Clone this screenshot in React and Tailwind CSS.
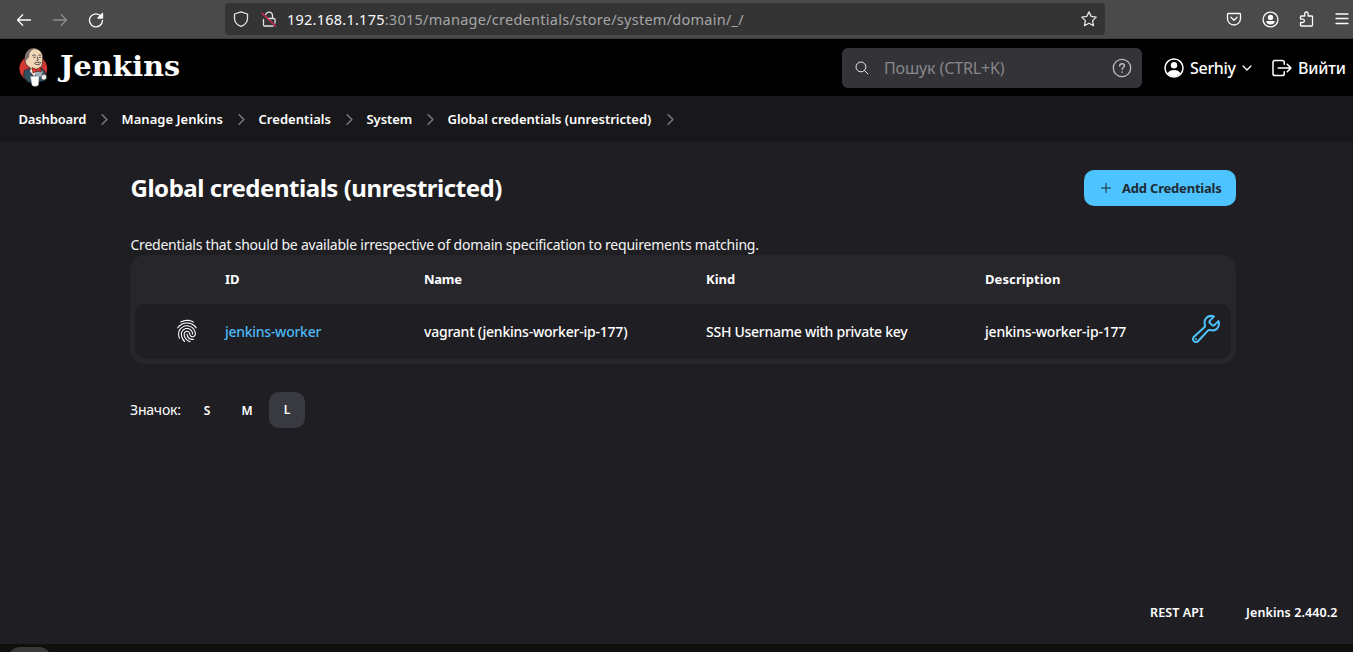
import React from "react";
import {
  IoAdd,
  IoBuildOutline,
  IoChevronDown,
  IoChevronForward,
  IoFingerPrintOutline,
  IoLogOutOutline,
  IoSearchOutline,
} from "react-icons/io5";

const stroke = {
  fill: "none",
  stroke: "currentColor",
  strokeWidth: 1.3,
  strokeLinecap: "round",
  strokeLinejoin: "round",
};

function Glyph({ className, children, size = 16 }) {
  return (
    <svg viewBox={`0 0 ${size} ${size}`} className={`block shrink-0 ${className}`} {...stroke}>
      {children}
    </svg>
  );
}

function AccountGlyph({ className }) {
  return (
    <svg viewBox="0 0 20 20" className={`block shrink-0 ${className}`}>
      <circle cx="10" cy="10" r="9" fill="none" stroke="currentColor" strokeWidth="1.5" />
      <circle cx="10" cy="7.3" r="3.2" fill="currentColor" />
      <path d="M3.6 15.2C4.9 12.8 7 12 10 12s5.100.8 6.400 3.200A8.300 8.300 0 0 1 10 18.400a8.300 8.300 0 0 1-6.400-3.200z" fill="currentColor" />
    </svg>
  );
}

function BrowserAccountGlyph({ className }) {
  return (
    <svg viewBox="0 0 16 16" className={`block shrink-0 ${className}`}>
      <circle cx="8" cy="8" r="7" fill="none" stroke="currentColor" strokeWidth="1.200" />
      <circle cx="8" cy="6" r="2.500" fill="currentColor" />
      <path d="M4 9.500h8c0 2-1.500 3.200-4 3.200S4 11.500 4 9.500z" fill="currentColor" />
    </svg>
  );
}

function BrowserBar() {
  return (
    <div className="flex h-[39px] shrink-0 items-center border-b border-[#3c3c3c] bg-[#4a4a4a] text-[#fbfbfe]">
      <Glyph className="mt-px ml-4 size-4">
        <path d="M14.500 8h-13M6.700 2.800 1.500 8l5.200 5.200" />
      </Glyph>
      <Glyph className="mt-px ml-5 size-4 text-[#8d8d8d]">
        <path d="M1.500 8h13M9.300 2.800 14.500 8l-5.200 5.200" />
      </Glyph>
      <Glyph className="mt-px ml-5 size-4">
        <path d="M13 4.200A6.500 6.500 0 1 0 14.500 8.500" />
        <path d="M14.500 1.500v4.500H10z" fill="currentColor" />
      </Glyph>
      <div className="ml-[121px] flex h-8 w-[880px] items-center rounded bg-[#343434] pr-2">
        <Glyph className="ml-2 size-4 text-[#e3e3e6]">
          <path d="M8 .8 14.500 3v4.200c0 3.800-2.200 6.500-6.500 8.100C3.700 13.700 1.500 11 1.500 7.200V3z" />
        </Glyph>
        <Glyph className="ml-3 size-4 text-[#e3e3e6]">
          <path d="M6.500 7.500H13c.6 0 1 .4 1 1V12M2.500 8.500V14c0 .6.400 1 1 1h8.500M4.700 3.500a3.500 3.500 0 0 1 6.800 1V7" />
          <path d="M1 2.200 14.500 15" stroke="#e22850" />
        </Glyph>
        <div className="mt-px ml-[10px] flex-1 whitespace-nowrap font-['Noto_Sans',sans-serif] text-[14.5px] text-[#a5a5a7]">
          <span className="tracking-[0.240px] text-[#fbfbfe]">192.168.1.175</span>
          <span className="tracking-[0.260px]">:3015/manage/credentials/store/system/domain/_/</span>
        </div>
        <Glyph className="size-4 text-[#e3e3e6]">
          <path d="m8 .9 2.200 4.500 5 .7-3.600 3.500.9 5L8 12.200l-4.500 2.400.9-5L.8 6.100l5-.7z" />
        </Glyph>
      </div>
      <Glyph className="ml-[121px] size-4">
        <path d="M2.300 2.500h11.400c.5 0 .8.300.8.800v4.200a6.500 6.500 0 0 1-13 0V3.300c0-.5.300-.8.800-.8z" />
        <path d="M5 6.300 8 9.200l3-2.900" />
      </Glyph>
      <BrowserAccountGlyph className="mt-px ml-5 size-[17px]" />
      <Glyph className="ml-5 size-4">
        <path d="M2 5h3.700V2.700a1.700 1.700 0 0 1 3.400 0V5h3.600c.5 0 .8.300.8.800v8.400c0 .5-.3.800-.8.800H2.300c-.5 0-.8-.3-.8-.8v-2.700h2.200a1.700 1.700 0 0 0 0-3.400H1.500V5.500z" />
      </Glyph>
      <Glyph className="ml-[19px] size-4">
        <path d="M2 3h12M2 7.500h12M2 12.500h12" />
      </Glyph>
    </div>
  );
}

function JenkinsMark() {
  return (
    <svg viewBox="0 0 30 40" className="block h-10 w-[30px] shrink-0">
      <ellipse cx="14.300" cy="21.500" rx="13.900" ry="13" fill="#d33833" />
      <path d="M5.500 23.500c3-1.800 6-2 9-1.500l8-1 3 3 1.800 6-1.800 4-6 1-4 2-7-2-4-6z" fill="#335061" stroke="#111f29" strokeWidth=".7" />
      <path d="M6.500 10C7 4.500 11 1.300 15.500 1.600c5.500.3 8.700 4.700 8.200 10.400-.2 4 .2 7-3.700 9.500-4 2-8.500 1-10.800-2.500-2.700-.8-3.700-5.500-2.700-9z" fill="#f0d6b7" stroke="#302b29" strokeWidth=".8" />
      <path d="M6 9.500C6.500 4 11.500.6 16.500 1.500 12 3 10.500 5.500 10.300 8c.5 1.700-1 2.500-1.300 4-1-.8-2 .5-1.500 2-1.700-.5-2-2.500-1.500-4.500z" fill="#81706d" />
      <path d="M13.500 8.500c1-.8 2-.8 3-.2M19.500 8.300c1-.7 1.700-.6 2.500 0M14.700 10.300h1.500M20.300 10.300h1.300M18.300 10l1 3.200-1.500.3M15.500 16.200c2-1.200 4.500-1.200 6.300-.5M16.500 17.300c1.500.7 3.300.5 4.500-.4" fill="none" stroke="#302b29" strokeWidth=".8" strokeLinecap="round" />
      <path d="m12 21 5 5.500-1.500 3-4.500-5z" fill="#f7e4cd" />
      <path d="m16 25 8-1-1.500 6-5-1z" fill="#9fb0bb" />
      <path d="m13 20.500 4.300 1.800 4.200-2 .8 4.700-3.800-1.200-4.500 2.200z" fill="#d33833" stroke="#6b1714" strokeWidth=".6" />
      <path d="M11.500 29.500 20 29l-.5 9c-1.300 1.700-5.300 1.700-6.500.2z" fill="#fff" stroke="#999" strokeWidth=".5" />
      <path d="M22.500 28.500c2-1.300 4.500-1.200 5 .5l-.2 3-2.500 1-2.500-1z" fill="#f4f4f4" stroke="#444" strokeWidth=".6" />
    </svg>
  );
}

function Header() {
  return (
    <header className="flex h-[57px] shrink-0 items-center bg-black text-white">
      <div className="-mt-px ml-[19px]">
        <JenkinsMark />
      </div>
      <div className="-mt-[3px] ml-[11px] w-[140px] whitespace-nowrap font-['DejaVu_Serif',serif] text-[28.6px] leading-10 font-bold">Jenkins</div>
      <div className="ml-auto flex h-10 w-[300px] items-center rounded-md bg-[#333338]">
        <IoSearchOutline className="ml-3 size-4 text-[#e8e8ea]" />
        <span className="ml-[14px] flex-1 whitespace-nowrap text-base tracking-[-0.140px] text-[#87878b]">Пошук (CTRL+K)</span>
        <Glyph size={20} className="mr-[10px] size-5 text-[#bdbdc0]">
          <circle cx="10" cy="10" r="8.700" />
          <path d="M7.700 8c0-1.500 1-2.300 2.400-2.300 1.300 0 2.300.8 2.300 2 0 1.700-2.300 1.900-2.300 3.600M10.100 14v.2" strokeWidth="1.500" />
        </Glyph>
      </div>
      <div className="ml-[22px] flex w-[90px] items-center">
        <AccountGlyph className="size-5" />
        <span className="ml-[6px] w-[50px] whitespace-nowrap text-base font-medium tracking-[-0.300px]">Serhiy</span>
        <IoChevronDown className="size-[14px] shrink-0" />
      </div>
      <div className="ml-[16px] flex w-[83px] items-center">
        <IoLogOutOutline className="size-[24px] shrink-0" />
        <span className="ml-[4px] whitespace-nowrap text-base font-medium tracking-[-0.200px]">Вийти</span>
      </div>
    </header>
  );
}

function Crumb({ width, tracking, children }) {
  return (
    <>
      <span className={`${width} ${tracking} shrink-0 whitespace-nowrap`}>{children}</span>
      <IoChevronForward className="mx-[9px] size-[17px] shrink-0 text-[#77777b]" />
    </>
  );
}

function Breadcrumbs() {
  return (
    <nav className="flex h-[46px] shrink-0 items-center bg-[#18181b] pt-px pl-[18.5px] text-[13px] font-semibold text-white">
      <Crumb width="w-[68px]" tracking="tracking-[-0.150px]">Dashboard</Crumb>
      <Crumb width="w-[102px]" tracking="tracking-[0.050px]">Manage Jenkins</Crumb>
      <Crumb width="w-[73px]" tracking="tracking-[0.050px]">Credentials</Crumb>
      <Crumb width="w-[46px]" tracking="tracking-[-0.050px]">System</Crumb>
      <Crumb width="w-[205px]" tracking="tracking-[-0.010px]">Global credentials (unrestricted)</Crumb>
    </nav>
  );
}

function CredentialsTable() {
  const columns = "grid grid-cols-[90px_199px_282px_279px_1fr]";
  return (
    <section className="h-[109px] rounded-[15px] bg-[#26262b] px-[5px] pb-[5px] text-white">
      <div className={`${columns} h-[49px] items-center text-[13px] font-bold`}>
        <span />
        <span>ID</span>
        <span className="tracking-[-0.300px]">Name</span>
        <span>Kind</span>
        <span className="tracking-[0.100px]">Description</span>
      </div>
      <div className={`${columns} h-[55px] items-center rounded-[10px] bg-[#1f1f23] text-[14px] font-medium whitespace-nowrap`}>
        <IoFingerPrintOutline className="-mt-px ml-10 size-6" />
        <a className="tracking-[-0.270px] text-[#4db8f5]">jenkins-worker</a>
        <span className="tracking-[-0.220px]">vagrant (jenkins-worker-ip-177)</span>
        <span className="tracking-[-0.260px]">SSH Username with private key</span>
        <div className="flex items-center justify-between">
          <span className="tracking-[-0.200px]">jenkins-worker-ip-177</span>
          <IoBuildOutline className="mr-[9px] -mt-[6px] size-8 text-[#4dc3ff]" />
        </div>
      </div>
    </section>
  );
}

export default function App() {
  return (
    <div className="flex h-[652px] w-[1353px] flex-col overflow-hidden bg-[#1f1f23] font-['Noto_Sans',sans-serif]">
      <BrowserBar />
      <Header />
      <Breadcrumbs />
      <main className="flex min-h-0 flex-1 flex-col pt-7 pr-[117px] pl-[130px]">
        <div className="flex h-9 items-center justify-between">
          <h1 className="ml-[0.5px] whitespace-nowrap text-2xl font-bold text-white tracking-[-0.460px]">Global credentials (unrestricted)</h1>
          <button className="flex h-9 w-[152px] items-center rounded-[10px] bg-[#4dc3ff] text-[#1f2b33]">
            <IoAdd className="ml-[14px] size-4" />
            <span className="mt-px ml-2 whitespace-nowrap text-[13px] font-bold tracking-[-0.200px]">Add Credentials</span>
          </button>
        </div>
        <p className="mt-7 ml-[0.5px] h-[21px] whitespace-nowrap text-[14px] leading-[21px] tracking-[-0.230px] text-[#f5f5f5]">
          Credentials that should be available irrespective of domain specification to requirements matching.
        </p>
        <CredentialsTable />
        <div className="mt-7 flex h-9 items-center text-white">
          <span className="-mt-px w-[59px] text-[14px] tracking-[-0.200px]">Значок:</span>
          <span className="mt-px w-9 text-center text-xs font-semibold">S</span>
          <span className="mt-px ml-1 w-9 text-center text-xs font-semibold">M</span>
          <span className="ml-1 flex size-9 items-center justify-center rounded-[10px] bg-[#393941] text-xs font-semibold">L</span>
        </div>
      </main>
      <footer className="flex h-[64px] shrink-0 items-center justify-end pt-[3px] pr-[15px] text-[12.5px] font-semibold text-white">
        <span className="w-[96px] whitespace-nowrap tracking-[0.100px]">REST API</span>
        <span className="w-[92px] whitespace-nowrap tracking-[0.100px]">Jenkins 2.440.2</span>
      </footer>
      <div className="h-2 shrink-0 overflow-hidden bg-[#100f0e] pt-[3px] pl-2">
        <div className="h-8 w-[43px] rounded-xl bg-[#3b3a3a]" />
      </div>
    </div>
  );
}
